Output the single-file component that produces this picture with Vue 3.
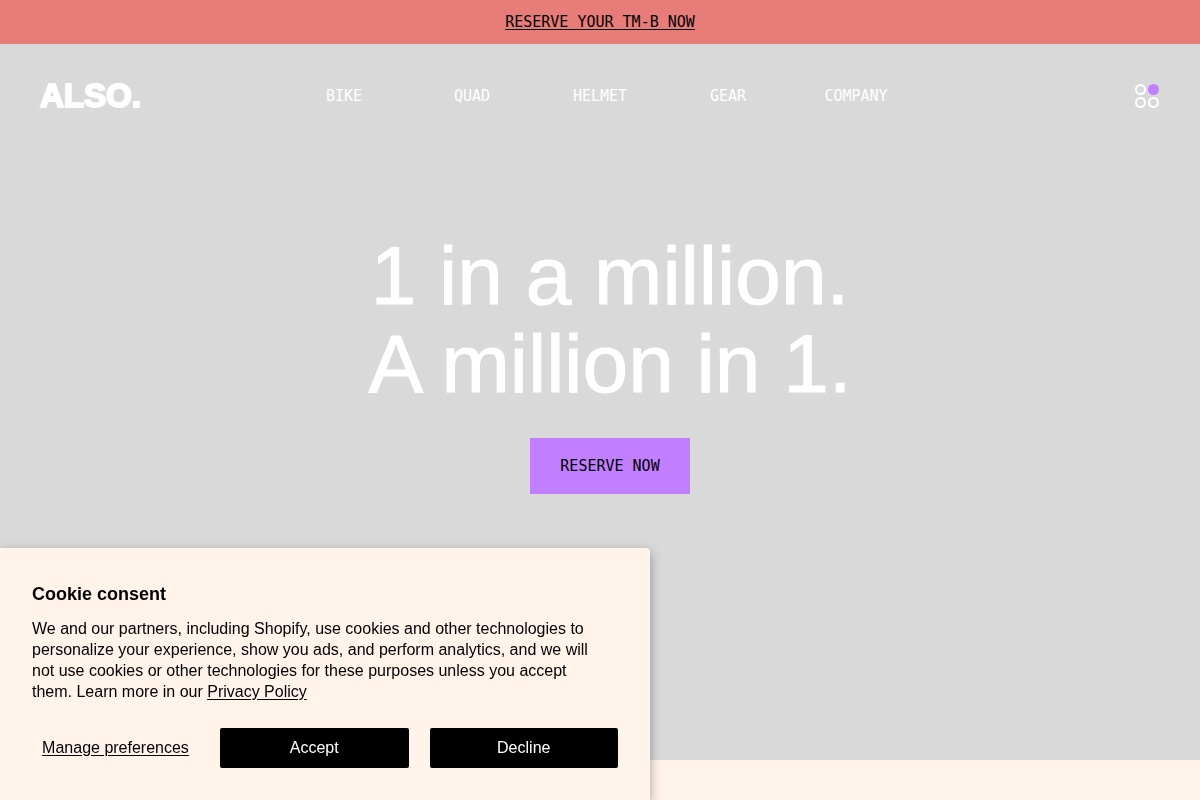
<script setup>
const links = ['Bike', 'Quad', 'Helmet', 'Gear', 'Company']
</script>

<template>
  <div class="page">
    <aside class="banner"><a href="#reserve">RESERVE YOUR TM-B NOW</a></aside>
    <main class="hero">
      <header class="header">
        <a class="logo" href="#home">ALSO.</a>
        <nav class="nav" aria-label="Main">
          <a v-for="link in links" :key="link" :href="'#' + link.toLowerCase()">{{ link.toUpperCase() }}</a>
        </nav>
        <button class="menu" type="button" aria-label="Open menu">
          <svg width="25" height="24" viewBox="0 0 25 24" fill="none" stroke="#fff" stroke-width="2">
            <circle cx="5.5" cy="5.5" r="4.5" />
            <circle cx="18.5" cy="5.5" r="5.5" fill="#c17fff" stroke="none" />
            <circle cx="5.5" cy="18.5" r="4.5" />
            <circle cx="18.5" cy="18.5" r="4.5" />
          </svg>
        </button>
      </header>
      <section class="intro">
        <h1>1 in a million.<br />A million in 1.</h1>
        <a class="cta" href="#reserve">RESERVE NOW</a>
      </section>
    </main>

    <section class="cookie" role="dialog" aria-labelledby="cookie-title">
      <h2 id="cookie-title">Cookie consent</h2>
      <p>
        We and our partners, including Shopify, use cookies and other technologies to personalize your
        experience, show you ads, and perform analytics, and we will not use cookies or other technologies
        for these purposes unless you accept them. Learn more in our <a href="#privacy">Privacy Policy</a>
      </p>
      <div class="actions">
        <button class="manage" type="button">Manage preferences</button>
        <button class="solid" type="button">Accept</button>
        <button class="solid" type="button">Decline</button>
      </div>
    </section>
  </div>
</template>

<style>
body {
  margin: 0;
  background: #fff3ea;
}
</style>

<style scoped>
.page {
  min-height: 100vh;
  font-family: "Liberation Sans", Arial, sans-serif;
  color: #000;
}
.banner {
  display: flex;
  align-items: center;
  justify-content: center;
  height: 44px;
  background: #e87c78;
}
.banner a,
.nav a,
.cta {
  font-family: "DejaVu Sans Mono", monospace;
  font-size: 15px;
  line-height: 20px;
  color: #000;
}
.banner a {
  text-underline-offset: 2px;
  text-decoration-thickness: 1px;
}
.hero {
  min-height: calc(100vh - 84px);
  background: #d9d9d9;
}
.header {
  display: grid;
  grid-template-columns: 1fr minmax(0, 640px) 1fr;
  align-items: center;
  padding: 36px 40px 0;
}
.logo {
  font-size: 33px;
  line-height: 32px;
  font-weight: 700;
  color: #fff;
  text-decoration: none;
  -webkit-text-stroke: 2px #fff;
}
.nav {
  display: grid;
  grid-template-columns: repeat(5, 1fr);
  text-align: center;
}
.nav a {
  color: #fff;
  text-decoration: none;
}
.menu {
  justify-self: end;
  display: flex;
  padding: 0;
  border: 0;
  background: none;
}
.intro {
  display: flex;
  flex-direction: column;
  align-items: center;
  padding: 120px 0 40px 20px;
}
h1 {
  margin: 0;
  font-size: 82px;
  line-height: 88px;
  font-weight: 400;
  text-align: center;
  color: #fff;
  -webkit-text-stroke: 1px #fff;
}
.cta {
  margin-top: 30px;
  padding: 18px 30px;
  background: #c17fff;
  text-decoration: none;
}
.cookie {
  position: fixed;
  left: 0;
  bottom: 0;
  box-sizing: border-box;
  width: 100%;
  max-width: 650px;
  padding: 32px;
  border-radius: 0 4px 0 0;
  background: #fff3ea;
  box-shadow: 0 4px 12px rgba(0, 0, 0, 0.35);
}
h2 {
  margin: 0 0 10px;
  font-size: 18px;
  line-height: 28px;
  font-weight: 700;
}
p {
  margin: 0;
  padding-right: 12px;
  font-size: 16px;
  line-height: 21px;
}
p a {
  color: #000;
  text-underline-offset: 2px;
}
.actions {
  display: flex;
  gap: 21px;
  margin-top: 26px;
}
.actions button {
  height: 40px;
  padding: 0 8px;
  border: 0;
  border-radius: 2px;
  font-family: inherit;
  font-size: 16px;
  line-height: 20px;
}
.actions .manage {
  min-width: 167px;
  background: none;
  color: #000;
  text-decoration: underline;
  text-underline-offset: 2px;
}
.actions .solid {
  flex: 1;
  background: #000;
  color: #fff;
}
</style>
